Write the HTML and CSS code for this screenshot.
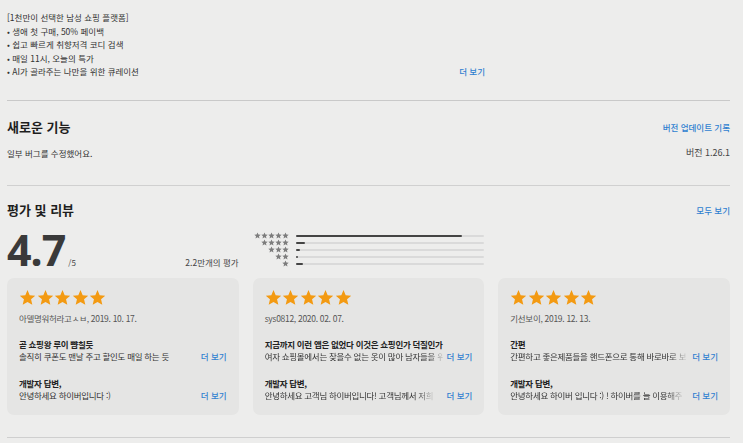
FILE: index.html
```html
<!DOCTYPE html>
<html lang="ko">
<head>
<meta charset="utf-8">
<link rel="stylesheet" href="styles.css">
</head>
<body>
<svg width="0" height="0" class="defs">
  <defs>
    <symbol id="star" viewBox="0 0 24 24"><path d="M12 1.5l3.1 7.2 7.8.7-5.9 5.2 1.8 7.7L12 18.3 5.2 22.3 7 14.6 1.1 9.4l7.8-.7z"/></symbol>
  </defs>
</svg>
<section class="desc">
  <p>[1천만이 선택한 남성 쇼핑 플랫폼]</p>
  <p>• 생애 첫 구매, 50% 페이백</p>
  <p>• 쉽고 빠르게 취향저격 코디 검색</p>
  <p>• 매일 11시, 오늘의 특가</p>
  <p class="lastline"><span>• AI가 골라주는 나만을 위한 큐레이션</span><a class="more">더 보기</a></p>
</section>
<hr class="sep sep1">
<section class="news">
  <div class="head"><h2>새로운 기능</h2><a class="link">버전 업데이트 기록</a></div>
  <div class="sub"><span>일부 버그를 수정했어요.</span><span class="ver">버전 1.26.1</span></div>
</section>
<hr class="sep sep2">
<section class="reviews">
  <div class="head"><h2>평가 및 리뷰</h2><a class="link">모두 보기</a></div>
  <div class="summary">
    <div class="score"><span class="big">4.7</span><span class="of">/5</span><span class="count">2.2만개의 평가</span></div>
    <div class="bars">
      <div class="brow"><span class="bstars"><svg><use href="#star"/></svg><svg><use href="#star"/></svg><svg><use href="#star"/></svg><svg><use href="#star"/></svg><svg><use href="#star"/></svg></span><span class="track"><i class="fill" style="width:88%"></i></span></div>
      <div class="brow"><span class="bstars"><svg><use href="#star"/></svg><svg><use href="#star"/></svg><svg><use href="#star"/></svg><svg><use href="#star"/></svg></span><span class="track"><i class="fill" style="width:5%"></i></span></div>
      <div class="brow"><span class="bstars"><svg><use href="#star"/></svg><svg><use href="#star"/></svg><svg><use href="#star"/></svg></span><span class="track"><i class="fill" style="width:2.5%"></i></span></div>
      <div class="brow"><span class="bstars"><svg><use href="#star"/></svg><svg><use href="#star"/></svg></span><span class="track"><i class="fill" style="width:1.5%"></i></span></div>
      <div class="brow"><span class="bstars"><svg><use href="#star"/></svg></span><span class="track"><i class="fill" style="width:4%"></i></span></div>
    </div>
  </div>
  <div class="cards">
    <article class="card">
      <div class="stars"><svg><use href="#star"/></svg><svg><use href="#star"/></svg><svg><use href="#star"/></svg><svg><use href="#star"/></svg><svg><use href="#star"/></svg></div>
      <div class="author">아델명워허라고ㅅㅂ, 2019. 10. 17.</div>
      <div class="title">곧 쇼핑왕 루이 뺨칠듯</div>
      <div class="line"><span class="txt">솔직히 쿠폰도 맨날 주고 할인도 매일 하는 듯</span><a class="more">더 보기</a></div>
      <div class="title dev">개발자 답변,</div>
      <div class="line"><span class="txt">안녕하세요 하이버입니다 :)</span><a class="more">더 보기</a></div>
    </article>
    <article class="card">
      <div class="stars"><svg><use href="#star"/></svg><svg><use href="#star"/></svg><svg><use href="#star"/></svg><svg><use href="#star"/></svg><svg><use href="#star"/></svg></div>
      <div class="author">sys0812, 2020. 02. 07.</div>
      <div class="title">지금까지 이런 앱은 없었다 이것은 쇼핑인가 덕질인가</div>
      <div class="line"><span class="txt fade">여자 쇼핑몰에서는 찾을수 없는 옷이 많아 남자들을 위</span><a class="more">더 보기</a></div>
      <div class="title dev">개발자 답변,</div>
      <div class="line"><span class="txt fade">안녕하세요 고객님 하이버입니다! 고객님께서 저희</span><a class="more">더 보기</a></div>
    </article>
    <article class="card">
      <div class="stars"><svg><use href="#star"/></svg><svg><use href="#star"/></svg><svg><use href="#star"/></svg><svg><use href="#star"/></svg><svg><use href="#star"/></svg></div>
      <div class="author">기선보이, 2019. 12. 13.</div>
      <div class="title">간편</div>
      <div class="line"><span class="txt fade">간편하고 좋은제품들을 핸드폰으로 통해 바로바로 보</span><a class="more">더 보기</a></div>
      <div class="title dev">개발자 답변,</div>
      <div class="line"><span class="txt fade">안녕하세요 하이버 입니다 :) ! 하이버를 늘 이용해주</span><a class="more">더 보기</a></div>
    </article>
  </div>
</section>
<hr class="sep sep3">
</body>
</html>
```
FILE: styles.css
```css
html, body {
  margin: 0;
  padding: 0;
}
body {
  width: 723px;
  padding: 0 13px 0 7px;
  background: #ededec;
  color: #2e2e2e;
  font-family: "Noto Sans CJK KR", "Noto Sans", sans-serif;
  font-size: 8.5px;
  overflow: hidden;
  height: 443px;
}
.defs { position: absolute; }
p { margin: 0; }
a { text-decoration: none; }
.more, .link {
  color: #2f7fd0;
  font-weight: 500;
}
.desc {
  padding-top: 11px;
  width: 478px;
}
.desc p {
  line-height: 13.6px;
  font-size: 8.5px;
  color: #333;
}
.lastline {
  display: flex;
  justify-content: space-between;
}
.sep {
  border: 0;
  height: 1px;
  background: #c9c9c9;
  margin: 0;
}
.sep1 { margin-top: 21px; height: 1.5px; }
.news { padding-top: 17px; }
.head {
  display: flex;
  justify-content: space-between;
  align-items: center;
}
h2 {
  margin: 0;
  font-size: 13px;
  font-weight: 700;
  color: #1e1e1e;
  line-height: 18px;
}
.head .link { font-size: 8.5px; }
.sub {
  display: flex;
  justify-content: space-between;
  margin-top: 11px;
  line-height: 12px;
  color: #333;
}
.ver { color: #444; font-size: 9px; }
.sep2 { margin-top: 26px; background: #d0d0d0; }
.reviews { padding-top: 15px; }
.summary {
  display: grid;
  grid-template-columns: 1fr 1fr 1fr;
  column-gap: 14px;
  height: 50px;
  margin-top: 9px;
}
.score {
  display: flex;
  align-items: baseline;
  position: relative;
}
.big {
  font-family: "Noto Sans", "Liberation Sans", sans-serif;
  font-size: 43px;
  font-weight: 700;
  color: #3a3a3a;
  line-height: 44px;
  letter-spacing: -1px;
}
.of { font-size: 8px; margin-left: 3px; color: #444; }
.count { margin-left: auto; font-size: 8.5px; color: #444; }
.bars {
  padding-top: 4px;
  display: flex;
  flex-direction: column;
}
.brow {
  display: flex;
  align-items: center;
  height: 7px;
}
.bstars {
  width: 36px;
  display: flex;
  justify-content: flex-end;
}
.bstars svg {
  width: 7px;
  height: 7px;
  fill: #7d7d7d;
}
.track {
  margin-left: 7px;
  flex: 1;
  height: 2px;
  background: #dadada;
  border-radius: 1px;
  display: flex;
}
.fill {
  display: block;
  background: #444;
  height: 2px;
  border-radius: 1px;
}
.cards {
  margin-top: 0;
  display: grid;
  grid-template-columns: 1fr 1fr 1fr;
  column-gap: 14px;
}
.card {
  background: #e5e5e4;
  border-radius: 7px;
  height: 137px;
  padding: 11px 12px 0 12px;
  box-sizing: border-box;
  overflow: hidden;
  letter-spacing: -0.3px;
}
.stars {
  display: flex;
  gap: 0.5px;
  height: 17px;
}
.stars svg {
  width: 17px;
  height: 17px;
  fill: #f39a12;
}
.author {
  margin-top: 6px;
  color: #555;
  line-height: 12px;
}
.title {
  margin-top: 14px;
  font-weight: 700;
  color: #222;
  line-height: 12px;
}
.title.dev { margin-top: 14px; }
.line {
  display: flex;
  justify-content: space-between;
  line-height: 13px;
  color: #333;
  gap: 3px;
}
.txt {
  white-space: nowrap;
  overflow: hidden;
  min-width: 0;
}
.fade {
  -webkit-mask-image: linear-gradient(to right, #000 calc(100% - 16px), rgba(0,0,0,0.15) 100%);
  mask-image: linear-gradient(to right, #000 calc(100% - 16px), rgba(0,0,0,0.15) 100%);
}
.line .more { flex: none; letter-spacing: 0; }
.sep3 { margin-top: 22px; background: #cfcfcf; }
```
